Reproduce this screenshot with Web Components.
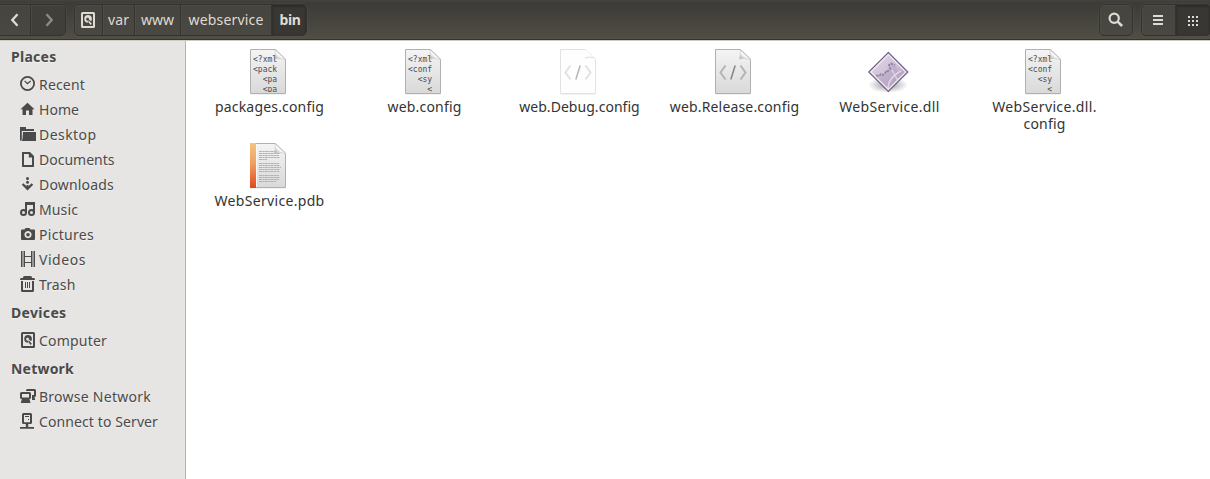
<!DOCTYPE html>
<html lang="en">
<head>
<meta charset="utf-8">
<title>bin</title>
<style>
body{margin:0;font:14px/25px "Noto Sans","Open Sans",sans-serif;color:#4a4a4a;background:#fff;width:1210px;height:479px;overflow:hidden}
</style>
</head>
<body>
<file-window></file-window>
<script>
const disk = '<path fill-rule="evenodd" d="M2.500 0h11q1.500 0 1.500 1.500v13q0 1.500-1.500 1.500h-11q-1.500 0-1.500-1.500v-13q0-1.500 1.500-1.500zM3 2v12h10v-12z"/><path fill-rule="evenodd" d="M8 3a3.900 3.900 0 0 1 3.900 3.900q0 1.300-.8 2.400l-2.200-1.800a1.400 1.400 0 1 0-1.300 1l.7 2.300a3.900 3.900 0 0 1-.3-7.800z"/><path d="M8.600 8.200l3.300 3.500-1.300 1.300-2.300-2.900z"/>';
const glyphs = {
  disk,
  recent:'<circle cx="7.500" cy="7.500" r="6.600" fill="none" stroke="currentColor" stroke-width="1.800"/><path d="M4.600 4.800l2.800 2.800 3.400-2.500" fill="none" stroke="currentColor" stroke-width="1.200"/>',
  home:'<path d="M7.500 1.800L14.500 8.300h-2V14H9V9.500H6V14H2.500V8.300H.5z"/>',
  desktop:'<path d="M0 1h6v2h8v2H1.800v8.500L0 15z"/><path d="M3 6h13v8.500q0 .5-.5.5H.5q1.700 0 2-2z"/>',
  document:'<path fill-rule="evenodd" d="M2 1.500q0-.5.5-.5H10l4 4v10.500q0 .5-.5.5h-11q-.5 0-.5-.500zM4 3v11h8V6.500H8.800V3z"/>',
  download:'<circle cx="7.500" cy="2.500" r="1.500"/><circle cx="7.500" cy="6.200" r="1.500"/><path d="M2.600 8l4.900 4.900L12.400 8" fill="none" stroke="currentColor" stroke-width="2.300"/><path d="M6.500 9h2v3h-2z"/>',
  music:'<path d="M6 12V2h8v10" fill="none" stroke="currentColor" stroke-width="2"/><path d="M5 1h10v3H5z"/><circle cx="3.500" cy="11.500" r="2.500" fill="none" stroke="currentColor" stroke-width="2"/><circle cx="11.500" cy="11.500" r="2.500" fill="none" stroke="currentColor" stroke-width="2"/>',
  camera:'<path fill-rule="evenodd" d="M4.500 3.500L5.500 2h4l1 1.500H14q1 0 1 1V13q0 1-1 1H2q-1 0-1-1V4.500q0-1 1-1zM8 5a3.600 3.600 0 1 0 .01 0zM8 6.900a1.800 1.800 0 1 1-.01 0z"/>',
  video:'<path d="M1.500 0v16M4.500 0v16M11.500 0v16M14.500 0v16M4 5.500h8M4 11.500h8" fill="none" stroke="currentColor"/><path d="M3 .5v15M13 .5v15" stroke="currentColor" stroke-width="2" stroke-dasharray="1 1" fill="none"/>',
  trash:'<path fill-rule="evenodd" d="M3 1.500Q3 0 4.500 0h6Q12 0 12 1.500V2h2.500l.5 2H0l.5-2H3z"/><path fill-rule="evenodd" d="M1 5h13v9.500q0 1.500-1.500 1.500h-10Q1 16 1 14.500zM3 5v9h9V5z"/><path d="M5 6h1v6H5zM7 6h1v6H7zM9 6h1v6H9z"/>',
  network:'<path fill-rule="evenodd" d="M1.500 4h8Q11 4 11 5.500v4Q11 11 9.500 11l1 4H.8l1-4Q0 11 0 9.500v-4Q0 4 1.500 4zM2 6v3.500h7V6z"/><path d="M6 3V2.500Q6 1 7.500 1h7Q16 1 16 2.500V7.500q0 1.500-1.500 1.500L15.200 12H12V7h2V3z"/>',
  server:'<path fill-rule="evenodd" d="M3.500 0h7Q12 0 12 1.500v8q0 1.500-1.500 1.500H8.300v3H14v1.800H0V14h5.800v-3H3.500Q2 11 2 9.500v-8Q2 0 3.500 0zM4 2v7.200h6V2z"/><path d="M5 3h4v1H5zM8 6h1v1H8z"/>',
  back:'<path d="M10.500 2.300L5.300 8l5.200 5.700" fill="none" stroke="currentColor" stroke-width="2.300"/>',
  forward:'<path d="M5.500 2.300L10.700 8l-5.200 5.700" fill="none" stroke="currentColor" stroke-width="2.300"/>',
  search:'<circle cx="6.200" cy="6.200" r="4.600" fill="none" stroke="currentColor" stroke-width="2.200"/><path d="M9.600 9.600l4.500 4.400" stroke="currentColor" stroke-width="2.600"/>',
  list:'<path d="M3 3h10v2H3zM3 7h10v2H3zM3 11h10v2H3z"/>',
  grid:'<path d="M3 4h2v2H3zM7 4h2v2H7zM11 4h2v2h-2zM3 8h2v2H3zM7 8h2v2H7zM11 8h2v2h-2zM3 12h2v2H3zM7 12h2v2H7zM11 12h2v2h-2z"/>'
};
function define(name, markup, after){
  const t=document.createElement('template');
  t.innerHTML=markup;
  customElements.define(name,class extends HTMLElement{
    connectedCallback(){
      if(this.shadowRoot)return;
      this.attachShadow({mode:'open'}).append(t.content.cloneNode(true));
      if(after)after(this,this.shadowRoot);
    }
  });
}
/* A label whose letters are spaced so that the line takes the width in "w". */
define('fit-label','<style>:host{display:block;white-space:pre}span{display:inline-block}</style><span><slot></slot></span>',(el,root)=>{
  const s=root.querySelector('span'), n=el.textContent.length, w=+el.getAttribute('w');
  const gap=(w-s.getBoundingClientRect().width)/n;
  s.style.letterSpacing=gap.toFixed(3)+'px';
});
define('ui-glyph','<style>:host{display:block;width:16px;height:16px;flex:none}svg{display:block;fill:currentColor}</style><svg width="16" height="16" viewBox="0 0 16 16"></svg>',(el,root)=>{
  root.querySelector('svg').innerHTML=glyphs[el.getAttribute('name')];
});
define('tool-group',`<style>:host{display:flex;box-sizing:border-box;height:32px;border:1px solid #33322e;border-radius:5px;overflow:hidden;background:linear-gradient(#45443f,#4a4842);box-shadow:0 0 0 1px #55534c66}</style><slot></slot>`);
define('tool-button',`<style>:host{display:flex;box-sizing:border-box;align-items:center;justify-content:center;height:30px;color:#dfdbd2;border-right:1px solid #34332f;box-shadow:inset 1px 1px #55534c88}
:host(:last-child){border-right:0}:host([pressed]){background:#383733;box-shadow:inset 0 1px 3px #282724}:host([dim]){color:#8f8c85;background:#403f3a}:host([bold]){font-weight:700}</style><slot></slot>`,(el)=>{el.style.width=el.getAttribute('w')+'px';});
define('header-bar',`<style>:host{display:flex;box-sizing:border-box;height:41px;padding-top:4px;background:linear-gradient(#45433e 0,#3c3b37 3px,#504d45 38px,#55524a 39px,#34332f 39px,#34332f 40px,#cdc9c5 40px)}
.nav{margin-left:-3px;width:69px}.nav ui-glyph{margin-left:2px}.path{margin-left:8px;width:233px}.path ui-glyph{margin-right:1px}.find{margin-left:auto;width:34px}.view{margin:0 -1px 0 8px;width:70px}.view [name=list]{margin-right:1px}.bin{margin-left:2px}fit-label{line-height:30px}</style>
<tool-group class="nav"><tool-button w="33"><ui-glyph name="back"></ui-glyph></tool-button><tool-button w="34" dim><ui-glyph name="forward"></ui-glyph></tool-button></tool-group>
<tool-group class="path"><tool-button w="28"><ui-glyph name="disk"></ui-glyph></tool-button><tool-button w="32"><fit-label w="21">var</fit-label></tool-button><tool-button w="46"><fit-label w="33">www</fit-label></tool-button><tool-button w="91"><fit-label w="75">webservice</fit-label></tool-button><tool-button w="34" pressed bold><fit-label class="bin" w="21">bin</fit-label></tool-button></tool-group>
<tool-group class="find"><tool-button w="32"><ui-glyph name="search"></ui-glyph></tool-button></tool-group>
<tool-group class="view"><tool-button w="34"><ui-glyph name="list"></ui-glyph></tool-button><tool-button w="34" pressed><ui-glyph name="grid"></ui-glyph></tool-button></tool-group>`);
define('side-heading','<style>:host{display:block;height:31px;line-height:31px;padding-left:11px;font-weight:700}</style><slot></slot>');
define('side-item','<style>:host{display:flex;height:25px;padding-left:20px;gap:3px}ui-glyph{margin-top:4px}</style><ui-glyph></ui-glyph><slot></slot>',(el,root)=>{
  const g=document.createElement('ui-glyph');g.setAttribute('name',el.getAttribute('icon'));
  root.querySelector('ui-glyph').replaceWith(g);
});
define('side-bar','<style>:host{display:block;box-sizing:border-box;width:186px;height:438px;background:#e6e5e3;border-right:1px solid #b5b1ad;text-shadow:0 1px #f3f2f1;flex:none}</style><div></div>',(el,root)=>{
  const rows=[['','Places',45.5],['recent','Recent',46],['home','Home',40],['desktop','Desktop',57.5],['document','Documents',75.5],['download','Downloads',75],['music','Music',39],['camera','Pictures',55],['video','Videos',47],['trash','Trash',36.5],['','Devices',55.5],['disk','Computer',68],['','Network',63],['network','Browse Network',112],['server','Connect to Server',119]];
  root.querySelector('div').innerHTML=rows.map(([i,t,w])=>i?`<side-item icon="${i}"><fit-label w="${w}">${t}</fit-label></side-item>`:`<side-heading><fit-label w="${w}">${t}</fit-label></side-heading>`).join('');
});
const defs=`<defs><linearGradient id="p" x2="0" y2="1"><stop stop-color="#f4f4f4"/><stop offset="1" stop-color="#d9d9d9"/></linearGradient><linearGradient id="o" x2="0" y2="1"><stop stop-color="#f3c583"/><stop offset=".45" stop-color="#f0a060"/><stop offset="1" stop-color="#e4481c"/></linearGradient><linearGradient id="c" x1="0" y1="1" x2="1" y2="0"><stop stop-color="#999"/><stop offset=".45" stop-color="#fff"/><stop offset="1" stop-color="#e4e4e4"/></linearGradient><linearGradient id="v" x2="1" y2="1"><stop stop-color="#e2dbe7"/><stop offset=".5" stop-color="#cdc2d5"/><stop offset="1" stop-color="#a48fb2"/></linearGradient><radialGradient id="s"><stop stop-color="#000" stop-opacity=".4"/><stop offset="1" stop-color="#000" stop-opacity="0"/></radialGradient><clipPath id="k"><path d="M8 4h25v41H8z"/></clipPath><clipPath id="d"><path d="M24 7L42 25 24 43 6 25z"/></clipPath></defs>`;
const page=(fill='url(#p)',line='#b0b0b0')=>`<path d="M6.500 48h35" stroke="#000" stroke-opacity=".1"/><path d="M6.500 2.500h25l10 9.500v34.500h-35z" fill="${fill}" stroke="${line}"/>`;
const curl='<path d="M31 2.800q1 4.500-.5 9.200 5.500-2 11 .8z" fill="url(#c)" stroke="#c4c4c4" stroke-width=".6"/>';
const code=(a,b)=>`<path d="M16.500 18.500L11.500 25.500l5 7M31.500 18.500l5 7-5 7" fill="none" stroke="${a}" stroke-width="2"/><path d="M26.200 18.500L21.800 32.500" stroke="${b}" stroke-width="1.500"/>`;
const xml=lines=>page()+curl+'<g clip-path="url(#k)" font-family="DejaVu Sans Mono,monospace" font-size="8" fill="#4c4c4c">'+lines.map((l,i)=>`<text x="${9+4.816*l[0]}" y="${15+10*i}">${l[1]}</text>`).join('')+'</g>';
const pictures={
  packages:()=>xml([[0,'&lt;?xml'],[0,'&lt;pack'],[2,'&lt;pa'],[2,'&lt;pa']]),
  conf:()=>xml([[0,'&lt;?xml'],[0,'&lt;conf'],[2,'&lt;sy'],[4,'&lt;']]),
  debug:()=>page('#fefefe','#e2e2e2')+'<path d="M31 11q5-2 9 0" fill="none" stroke="#ddd"/><path d="M31.500 2.500l10 9.500" stroke="#fff" stroke-opacity=".6"/>'+code('#e2e2e2','#b4b4b4'),
  release:()=>page()+curl+code('#b4b4b4','#848484'),
  dll:()=>'<ellipse cx="24" cy="38" rx="20" ry="8" fill="url(#s)"/><path d="M24.300 5.500L43.800 25 24.300 44.500 4.800 25z" fill="url(#v)" stroke="#75598a" stroke-width="1.200"/><g clip-path="url(#d)"><path d="M12 30l3 0 2-2 2 1 2-1 1-3 3 0 1-3-1-4 2-1 5 2 1 4 3 2 6-1-8 9-10 10-12-12z" fill="#b3a1bf" opacity=".5"/><path d="M12 28.500l3 .5 2-2 2 1 2-1.500 1-2.500 2 0 2-2-1-4 2-1.500 4 1.500" fill="none" stroke="#957fa6" stroke-width="1.800" stroke-dasharray="2.500 1"/><path d="M24 44q-1-13 13-20M28 23l6 11" fill="none" stroke="#ded4e4" stroke-width="1.400"/></g><path d="M24.300 7.500L41.800 25 24.300 42.500 6.800 25z" fill="none" stroke="#efeaf2" stroke-width="1.200"/>',
  pdb:()=>{
    let s=page()+'<path d="M6 2h6v45H6z" fill="url(#o)"/>'+curl+'<path d="M12.500 3v43" stroke="#fafafa"/>';
    for(const [y,w] of [[10.5,16],[12.5,21],[14.5,20],[16.5,21],[18.5,8],[22.5,20],[24.5,21],[26.5,22],[28.5,21],[30.5,21],[34.5,20],[36.5,21],[38.5,20],[40.5,17]]) s+=`<path d="M15 ${y}h${w}" stroke="#b2b2b2" stroke-width="1" stroke-dasharray="3 .5 2 .3"/>`;
    return s;
  }
};
define('file-item',`<style>:host{display:flex;flex-direction:column;align-items:center;height:94px;line-height:17px;color:#333}svg{display:block;margin:0 3px 3px 0}</style><svg width="48" height="48" viewBox="0 0 48 48"></svg><slot></slot>`,(el,root)=>{
  root.querySelector('svg').innerHTML=defs+pictures[el.getAttribute('icon')]();
});
define('file-grid','<style>:host{display:grid;grid-template-columns:repeat(6,155px);align-content:start;padding:6px 0 0 6px;flex:1}</style><slot></slot>');
define('file-window',`<style>:host{display:block}main{display:flex}</style><header-bar></header-bar><main><side-bar></side-bar><file-grid>
<file-item icon="packages"><fit-label w="109">packages.config</fit-label></file-item>
<file-item icon="conf"><fit-label w="74">web.config</fit-label></file-item>
<file-item icon="debug"><fit-label w="120.5">web.Debug.config</fit-label></file-item>
<file-item icon="release"><fit-label w="129.5">web.Release.config</fit-label></file-item>
<file-item icon="dll"><fit-label w="100.5">WebService.dll</fit-label></file-item>
<file-item icon="conf"><fit-label w="104.5">WebService.dll.</fit-label><fit-label w="42">config</fit-label></file-item>
<file-item icon="pdb"><fit-label w="110">WebService.pdb</fit-label></file-item>
</file-grid></main>`);
</script>
</body>
</html>
